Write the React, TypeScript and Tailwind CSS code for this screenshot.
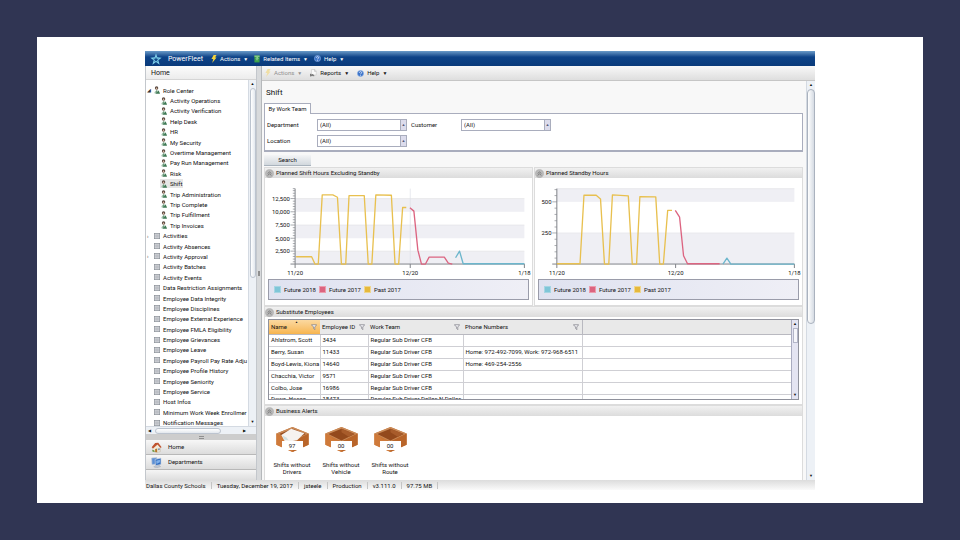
import React from "react";

interface TreeItem {
  label: string;
  depth: number;
  kind: "role" | "list";
  arrow?: "open" | "closed";
}

const roleItems = [
  "Activity Operations",
  "Activity Verification",
  "Help Desk",
  "HR",
  "My Security",
  "Overtime Management",
  "Pay Run Management",
  "Risk",
  "Shift",
  "Trip Administration",
  "Trip Complete",
  "Trip Fulfillment",
  "Trip Invoices",
];

const listItems = [
  "Activities",
  "Activity Absences",
  "Activity Approval",
  "Activity Batches",
  "Activity Events",
  "Data Restriction Assignments",
  "Employee Data Integrity",
  "Employee Disciplines",
  "Employee External Experience",
  "Employee FMLA Eligibility",
  "Employee Grievances",
  "Employee Leave",
  "Employee Payroll Pay Rate Adju",
  "Employee Profile History",
  "Employee Seniority",
  "Employee Service",
  "Host Infos",
  "Minimum Work Week Enrollmer",
  "Notification Messages",
];

const tree: TreeItem[] = [
  { label: "Role Center", depth: 0, kind: "role", arrow: "open" },
  ...roleItems.map((label): TreeItem => ({ label, depth: 1, kind: "role" })),
  ...listItems.map(
    (label): TreeItem => ({
      label,
      depth: 0,
      kind: "list",
      arrow:
        label === "Activities" || label === "Activity Approval"
          ? "closed"
          : undefined,
    })
  ),
];

const employees = [
  ["Ahlstrom, Scott", "3434", "Regular Sub Driver CFB", ""],
  ["Berry, Susan", "11433", "Regular Sub Driver CFB", "Home: 972-492-7099, Work: 972-968-6511"],
  ["Boyd-Lewis, Kiona", "14640", "Regular Sub Driver CFB", "Home: 469-254-2556"],
  ["Chacchia, Victor", "9571", "Regular Sub Driver CFB", ""],
  ["Colbo, Jose", "16986", "Regular Sub Driver CFB", ""],
  ["Dowe, Hosea", "18473", "Regular Sub Driver Dallas N Dallas", ""],
];

const PersonIcon = () => (
  <svg viewBox="0 0 14 18" className="h-[8px] w-[6px] shrink-0">
    <circle cx="6" cy="4.5" r="4" fill="#5b4a42" />
    <path d="M5 3.500a2 2 0 0 1 2.500 2v2H4z" fill="#d9b7a0" />
    <path d="M3 18c4-3 0-9 4-9 3 0 6 4 7 9z" fill="#3f7a55" />
    <path d="M1 14l4-4 1 5-4 3z" fill="#9cbda6" />
    <path d="M6 9l2 5 1-5z" fill="#f4f7f4" />
  </svg>
);

const ListIcon = () => (
  <svg viewBox="0 0 16 16" className="h-[6px] w-[6px] shrink-0">
    <rect x="1" y="1" width="14" height="14" fill="#eef0f3" stroke="#8b9098" strokeWidth="2" />
    <path d="M3 5h10M3 8h10M3 11h10" stroke="#7d828b" strokeWidth="1.5" />
  </svg>
);

const BoltIcon = ({ color }: { color: string }) => (
  <svg viewBox="0 0 16 22" className="h-[8px] w-[6px] shrink-0">
    <path d="M7 0h8l-4 7h4L3 22l3-11H1z" fill={color} />
  </svg>
);

const HelpIcon = () => (
  <svg viewBox="0 0 16 16" className="h-[7px] w-[7px] shrink-0">
    <circle cx="8" cy="8" r="7" fill="#3a72c8" stroke="#8fb2e6" strokeWidth="1.5" />
    <path d="M5.5 6.2c0-3.4 5-3.2 5-.2 0 2-2.4 1.8-2.4 4M8 11.5v1.6" fill="none" stroke="#fff" strokeWidth="1.7" />
  </svg>
);

const BookIcon = () => (
  <svg viewBox="0 0 14 18" className="h-[8px] w-[6px] shrink-0">
    <rect x="1" y="1" width="12" height="16" fill="#3da24b" />
    <path d="M1 1h12v3H1z" fill="#8ed08b" />
    <path d="M5 8c0-3 5-3 4 0l-2 2v2" fill="none" stroke="#e6f6e4" strokeWidth="1.6" />
  </svg>
);

const ReportIcon = () => (
  <svg viewBox="0 0 18 20" className="h-[8px] w-[7px] shrink-0">
    <path d="M4 1h8l4 4v10H4z" fill="#fafafa" stroke="#b7b7b7" />
    <path d="M1 19v-6h2v4h3v-3h2v3h3" fill="none" stroke="#4d4d4d" strokeWidth="1.8" />
    <path d="M11 1l1 5 4-1" fill="none" stroke="#8d8d8d" />
  </svg>
);

const FilterIcon = () => (
  <svg viewBox="0 0 16 16" className="h-[6px] w-[6px] shrink-0">
    <path d="M1 2h14L10 8v7L7 12V8z" fill="#f7f7fa" stroke="#75757f" strokeWidth="1.8" />
  </svg>
);

const StarLogo = () => (
  <svg viewBox="0 0 36 36" className="h-[12px] w-[12px] shrink-0">
    <path d="M18 1l4 12 13 1-10 8 4 13-11-8-11 8 4-13-10-8 13-1z" fill="#7fd0ea" />
    <path d="M18 11l2 6 7 0-6 4 2 6-5-4-5 4 2-6-6-4 7 0z" fill="#0f4a8a" />
  </svg>
);

const HouseIcon = () => (
  <svg viewBox="0 0 32 32" className="h-[11px] w-[11px] shrink-0">
    <path d="M5 14l11-9 11 9v14l-12 3-10-5z" fill="#f2ead9" stroke="#a79a86" />
    <path d="M2 15L12 3l9-1 10 13-4 2-8-10L6 19z" fill="#c0532f" />
    <path d="M12 20l6-1v11l-6-1z" fill="#b5772c" />
    <path d="M21 19l4-1v5l-4 1z" fill="#5c82ab" />
    <path d="M3 24l6-1 2 6-6-1z" fill="#6c9a45" />
  </svg>
);

const ComputerIcon = () => (
  <svg viewBox="0 0 32 32" className="h-[11px] w-[11px] shrink-0">
    <path d="M2 3l15-1v18L3 22z" fill="#5b8fd4" stroke="#b6c3d6" strokeWidth="2" />
    <path d="M12 7l17-4v19l-16 3z" fill="#2f6cc0" stroke="#cdd5e0" strokeWidth="2" />
    <path d="M15 11l11-3v7l-10 5z" fill="#7fb0ea" />
    <path d="M8 28l16-4 4 4-14 4z" fill="#c4cad3" stroke="#8c95a3" />
  </svg>
);

const CollapseIcon = () => (
  <svg viewBox="0 0 24 24" className="h-[9px] w-[9px] shrink-0">
    <circle cx="12" cy="12" r="11" fill="#b9b9b9" stroke="#a4a4a4" strokeWidth="1" />
    <path d="M7 12l5-4 5 4M7 17l5-4 5 4" fill="none" stroke="#6a6a6a" strokeWidth="2" />
  </svg>
);

const BoxIcon = ({ full }: { full?: boolean }) => (
  <svg viewBox="0 0 100 76" className="h-[25px] w-[33px]">
    <path d="M1 20L50 0l49 20v34L50 76 1 54z" fill="#c97534" />
    <path d="M50 42l49-22v34L50 76z" fill="#b9652a" />
    <path d="M1 20L50 0l49 20-49 24z" fill="#c98a58" />
    <path d="M10 21L50 5l40 16-40 20z" fill="#93491c" />
    <path d="M50 5l40 16-18 9-22-14z" fill="#a85c2b" />
    <path d="M1 20l14 6 10 12 12 2 13 8v28L1 54z" fill="#cf7a3a" />
    {full && <path d="M16 24L46 5l40 14-22 21-36 6z" fill="#f6f3f0" />}
    {full && <path d="M20 26l12 6 6 8-14-2z" fill="#cfe0e2" />}
  </svg>
);

const MenuButton = ({
  icon,
  label,
  className,
}: {
  icon: React.ReactNode;
  label: string;
  className?: string;
}) => (
  <button className={`flex items-center gap-[3px] ${className ?? ""}`}>
    {icon}
    <span>{label}</span>
    <span className="text-[5px]">▼</span>
  </button>
);

const Sidebar = () => (
  <aside className="flex w-[112px] shrink-0 flex-col border-x border-[#c3c7cc] bg-white">
    <h2 className="flex h-[14px] items-center border-b border-[#d5d5d5] bg-linear-to-b from-[#fcfcfc] to-[#ececec] pl-[5px] text-[7px]">
      Home
    </h2>
    <div className="flex h-[346px]">
      <div className="min-w-0 flex-1 overflow-hidden pt-[5px]">
        <ul className="flex h-[343px] flex-col">
          {tree.map((item) => (
            <li
              key={item.label}
              className={`flex min-h-0 flex-1 items-center ${item.depth ? "pl-[14px]" : "pl-px"}`}
            >
              {item.depth === 0 && (
                <span className="w-[6px] shrink-0 text-[5px] text-[#333]">
                  {item.arrow === "open" ? "◢" : item.arrow ? "›" : ""}
                </span>
              )}
              <button
                className={`flex shrink-0 items-center gap-[3px] whitespace-nowrap px-px ${item.label === "Shift" ? "bg-[#e6e6e6]" : ""}`}
              >
                {item.kind === "role" ? <PersonIcon /> : <ListIcon />}
                <span className="leading-[9px]">{item.label}</span>
              </button>
            </li>
          ))}
        </ul>
      </div>
      <div className="flex w-[8px] shrink-0 flex-col items-center justify-between border-l border-[#d4dae2] bg-[#edf1f6] text-[4px] leading-[8px]">
        <span>▲</span>
        <span className="w-[6px] flex-1 rounded-sm border border-[#bcc4cf] bg-linear-to-r from-white to-[#e3e8ee]" />
        <span className="h-[140px]" />
        <span>▼</span>
      </div>
    </div>
    <div className="flex h-[8px] items-center border-t border-[#d4dae2] bg-[#edf1f6] px-[2px] text-[4px]">
      <span>◀</span>
      <span className="ml-[4px] h-[6px] w-[66px] rounded-sm border border-[#bcc4cf] bg-linear-to-b from-white to-[#e3e8ee]" />
      <span className="ml-auto mr-[8px]">▶</span>
    </div>
    <div className="flex h-[6px] items-center justify-center bg-[#cdcdcd]">
      <span className="h-[3px] w-[5px] border-y border-[#8f8f8f]" />
    </div>
    <button className="flex h-[15px] items-center gap-[6px] border-b border-[#b8b8b8] bg-linear-to-b from-[#f7f7f7] to-[#dcdcdc] pl-[5px]">
      <HouseIcon />
      Home
    </button>
    <button className="flex h-[15px] items-center gap-[6px] border-b border-[#b8b8b8] bg-linear-to-b from-[#f7f7f7] to-[#dcdcdc] pl-[5px]">
      <ComputerIcon />
      Departments
    </button>
    <div className="min-h-[10px] flex-1 bg-linear-to-b from-[#f5f5f5] to-[#dedede]" />
  </aside>
);

const FilterSelect = ({ id, label }: { id: string; label: string }) => (
  <div className="flex items-center">
    <label htmlFor={id} className="w-[50px]">
      {label}
    </label>
    <div className="flex h-[12px] w-[90px] border border-[#a9adbd] bg-white">
      <select id={id} className="min-w-0 flex-1 appearance-none bg-white pl-[2px] leading-[10px]">
        <option>(All)</option>
      </select>
      <span className="flex w-[6px] items-center justify-center border-l border-[#a9adbd] bg-[#dcdcec] text-[4px] text-[#555a78]">
        ▲
      </span>
    </div>
  </div>
);

const PanelHeader = ({ title }: { title: string }) => (
  <h3 className="flex h-[10px] items-center gap-[2px] bg-linear-to-b from-[#f1f1f1] to-[#dcdcdc]">
    <CollapseIcon />
    {title}
  </h3>
);

interface ChartProps {
  title: string;
  axisX: number;
  midX: number;
  bands: [number, number][];
  labels: [string, number][];
  ticks: number[];
  dates: [string, number][];
  gridline?: boolean;
  past: string;
  future17: string;
  future18: string;
}

const ChartPanel = (props: ChartProps) => (
  <section className="min-w-0 flex-1 border border-[#dcdcdc] bg-white">
    <PanelHeader title={props.title} />
    <svg viewBox="12 51 807 297" className="block h-[99px] w-full" fontSize="18" fill="#111">
      {props.bands.map(([y, h]) => (
        <rect key={y} x={props.axisX} y={y} width={796 - props.axisX} height={h} fill="#efeff4" />
      ))}
      {props.bands.map(([y]) => (
        <path key={y} d={`M${props.axisX} ${y}H796`} stroke="#e2e2e7" strokeWidth="2" />
      ))}
      {props.gridline && <path d={`M${props.midX} 82V310`} stroke="#dcdfe6" strokeWidth="2" />}
      <path
        d={`M${props.axisX} 82V322M${props.axisX - 14} 310H796V322M${props.midX} 310V322`}
        fill="none"
        stroke="#7f8288"
        strokeWidth="3"
      />
      {props.ticks.map((y) => (
        <path key={y} d={`M${props.axisX - 7} ${y}h7`} stroke="#7f8288" strokeWidth="2" />
      ))}
      {props.labels.map(([text, y]) => (
        <g key={text}>
          <path d={`M${props.axisX - 14} ${y}h14`} stroke="#7f8288" strokeWidth="2" />
          <text x={props.axisX - 16} y={y + 7} textAnchor="end">
            {text}
          </text>
        </g>
      ))}
      {props.dates.map(([text, x]) => (
        <text key={text} x={x} y="344" textAnchor="middle">
          {text}
        </text>
      ))}
      <g fill="none" strokeWidth="4" strokeLinejoin="round">
        <polyline points={props.past} stroke="#e8c04f" />
        <polyline points={props.future17} stroke="#dc6480" />
        <polyline points={props.future18} stroke="#6cb6cc" />
      </g>
    </svg>
    <div className="mx-[3px] mt-[2px] mb-[5px] flex h-[21px] items-center gap-[3px] border border-[#9a9caa] bg-linear-to-r from-[#dfe2f0] to-[#efeff6] pl-[5px]">
      <span className="h-[7px] w-[7px] border border-[#a5d5e2] bg-[#7fc6d8]" />
      Future 2018
      <span className="h-[7px] w-[7px] border border-[#eb9cad] bg-[#dc6480]" />
      Future 2017
      <span className="h-[7px] w-[7px] border border-[#efd68d] bg-[#e5b93c]" />
      Past 2017
    </div>
  </section>
);

const EmployeeTable = () => (
  <div className="mx-[3px] mt-[2px] mb-[4px] flex h-[81px] overflow-hidden border border-[#8f919c] bg-white">
    <div className="min-w-0 flex-1 overflow-hidden">
      <table className="w-full table-fixed border-collapse text-left">
        <colgroup>
          <col className="w-[51px]" />
          <col className="w-[48px]" />
          <col className="w-[95px]" />
          <col className="w-[119px]" />
          <col />
        </colgroup>
        <thead>
          <tr className="h-[14px] bg-[#e9e9e9]">
            {["Name", "Employee ID", "Work Team", "Phone Numbers"].map((name, i) => (
              <th
                key={name}
                className={`border-b border-[#b9b9c0] p-0 pl-[2px] font-normal ${
                  i === 0 ? "bg-linear-to-b from-[#fbd9a0] to-[#f7b54d]" : ""
                } ${i === 3 ? "border-r" : ""}`}
              >
                <div className="relative flex items-center justify-between whitespace-nowrap pr-[3px]">
                  {name}
                  <FilterIcon />
                  {i === 0 && (
                    <span className="absolute -top-[3px] left-[24px] text-[3px] leading-[4px]">▲</span>
                  )}
                </div>
              </th>
            ))}
            <th className="border-b border-[#b9b9c0] p-0" />
          </tr>
        </thead>
        <tbody>
          {employees.map((row) => (
            <tr key={row[0]} className="h-[12px] last:align-top">
              {row.map((cell, i) => (
                <td
                  key={i}
                  className="overflow-hidden whitespace-nowrap border-r border-b border-[#cfcfd4] p-0 pl-[2px] leading-[8px]"
                >
                  {cell}
                </td>
              ))}
              <td className="border-b border-[#cfcfd4] p-0" />
            </tr>
          ))}
        </tbody>
      </table>
    </div>
    <div className="flex w-[7px] flex-col items-center border-l border-[#a9abc0] bg-[#e4e4f2] text-[4px] leading-[8px]">
      <span>▲</span>
      <span className="h-[15px] w-[5px] border border-[#b3b5c8] bg-[#f6f6fb]" />
      <span className="mt-auto">▼</span>
    </div>
  </div>
);

const alerts = [
  { count: "97", lines: "Shifts without Drivers", full: true },
  { count: "00", lines: "Shifts without Vehicle", full: false },
  { count: "00", lines: "Shifts without Route", full: false },
];

const Main = () => (
  <main className="flex min-w-0 flex-1 flex-col bg-[#f8f8f8]">
    <div className="flex h-[15px] shrink-0 items-center gap-[8px] border-b border-[#c6c6c6] bg-linear-to-b from-[#f8f8f8] to-[#dedede] pl-[3px]">
      <MenuButton icon={<BoltIcon color="#f0dfa6" />} label="Actions" className="text-[#909090]" />
      <MenuButton icon={<ReportIcon />} label="Reports" />
      <MenuButton icon={<HelpIcon />} label="Help" />
    </div>
    <div className="flex flex-1">
      <div className="flex min-w-0 flex-1 flex-col pr-[3px] pl-[2px]">
        <h1 className="pt-[6px] pl-[2px] text-[8px] leading-[12px]">Shift</h1>
        <div className="mt-[4px] flex">
          <button className="relative -mb-px h-[11px] w-[47px] border border-b-0 border-[#a9adbd] bg-white">
            By Work Team
          </button>
        </div>
        <form>
          <div className="flex h-[39px] flex-col justify-center gap-[4px] border border-b-2 border-[#a9adbd] bg-white pt-px pl-[2px]">
            <div className="flex gap-[4px]">
              <FilterSelect id="department" label="Department" />
              <FilterSelect id="customer" label="Customer" />
            </div>
            <FilterSelect id="location" label="Location" />
          </div>
          <button
            type="button"
            className="mt-[3px] mb-px block h-[11px] w-[47px] border-b border-[#a9b3bd] bg-linear-to-b from-[#f4f5f6] to-[#d2d8dd]"
          >
            Search
          </button>
        </form>
        <div className="flex gap-px">
          <ChartPanel
            title="Planned Shift Hours Excluding Standby"
            axisX={103}
            midX={451}
            bands={[[112, 40], [192, 40], [271, 39]]}
            labels={[["12,500", 112], ["10,000", 152], ["7,500", 192], ["5,000", 232], ["2,500", 271]]}
            ticks={[82, 88, 96, 104, 120, 128, 136, 144, 160, 168, 176, 184, 200, 208, 216, 224, 240, 248, 256, 264, 279, 287, 295, 303]}
            dates={[["11/20", 103], ["12/20", 451], ["1/18", 796]]}
            gridline
            past="106,288 153,288 163,310 173,310 185,101 217,101 231,108 243,310 256,310 266,103 312,103 324,310 335,310 347,101 394,102 405,310 416,310 428,139 439,139"
            future17="450,140 462,150 474,268 485,310 497,310 508,289 554,289 566,307 578,310"
            future18="588,291 600,271 611,309 796,309"
          />
          <ChartPanel
            title="Planned Standby Hours"
            axisX={78}
            midX={437}
            bands={[[82, 40], [216, 94]]}
            labels={[["500", 122], ["250", 216]]}
            ticks={[85, 103, 141, 160, 179, 198, 235, 254, 273, 292]}
            dates={[["11/20", 78], ["12/20", 437], ["1/18", 796]]}
            past="78,309 148,309 160,102 197,102 210,113 222,310 235,310 246,101 294,104 306,310 319,310 329,106 377,107 389,310 400,310 413,148 426,148"
            future17="436,148 449,168 461,285 473,309 570,309"
            future18="580,310 592,292 604,310 796,310"
          />
        </div>
        <section className="border border-[#dcdcdc] bg-white">
          <PanelHeader title="Substitute Employees" />
          <EmployeeTable />
        </section>
        <section className="flex-1 border border-b-0 border-[#dcdcdc] bg-white">
          <PanelHeader title="Business Alerts" />
          <div className="flex gap-[5px] pt-[11px] pl-[5px]">
            {alerts.map((alert) => (
              <button key={alert.lines} className="flex w-[44px] flex-col items-center">
                <span className="relative block">
                  <BoxIcon full={alert.full} />
                  <span className="absolute inset-x-[6px] bottom-[2px] bg-white text-center leading-[9px]">
                    {alert.count}
                  </span>
                </span>
                <span className="mt-[9px] block leading-[7px]">{alert.lines}</span>
              </button>
            ))}
          </div>
        </section>
      </div>
      <div className="flex w-[9px] shrink-0 flex-col items-center border-l border-[#d4dae2] bg-[#edf1f6] text-[4px] leading-[8px]">
        <span>▲</span>
        <span className="h-[235px] w-[8px] rounded-sm border border-[#aab2be] bg-linear-to-r from-white to-[#d5dbe3]" />
        <span className="mt-auto">▼</span>
      </div>
    </div>
  </main>
);

const statusItems = [
  "Dallas County Schools",
  "Tuesday, December 19, 2017",
  "jsteele",
  "Production",
  "v3.111.0",
  "97.75 MB",
];

export default function App() {
  return (
    <div className="flex min-h-screen bg-[#303553] p-[37px] font-['Roboto',sans-serif] text-[6px] leading-[8px] text-[#111]">
      <div className="flex-1 bg-white px-[108px] pt-[14px] pb-[13px]">
        <header className="flex h-[15px] items-center gap-[6px] bg-linear-to-b from-[#6a9bc8] via-[#0d4388] via-40% to-[#0a3a7a] pl-[5px] text-white">
          <div className="mr-[2px] flex items-center gap-[6px] text-[7px]">
            <StarLogo />
            PowerFleet
          </div>
          <MenuButton icon={<BoltIcon color="#f5d33c" />} label="Actions" />
          <MenuButton icon={<BookIcon />} label="Related Items" />
          <MenuButton icon={<HelpIcon />} label="Help" />
        </header>
        <div className="flex">
          <Sidebar />
          <div className="flex w-[5px] shrink-0 items-center border-r border-[#b5b8bb] bg-[#d8dadc]">
            <span className="mx-auto h-[5px] w-[2px] border-x border-[#8f8f8f]" />
          </div>
          <Main />
        </div>
        <footer className="flex h-[10px] items-center bg-linear-to-b from-[#dcdcdc] to-[#fafafa] pl-px">
          {statusItems.map((item) => (
            <span key={item} className="mr-[5px] border-r border-[#c4c4c4] pr-[5px] leading-[7px]">
              {item}
            </span>
          ))}
        </footer>
      </div>
    </div>
  );
}
